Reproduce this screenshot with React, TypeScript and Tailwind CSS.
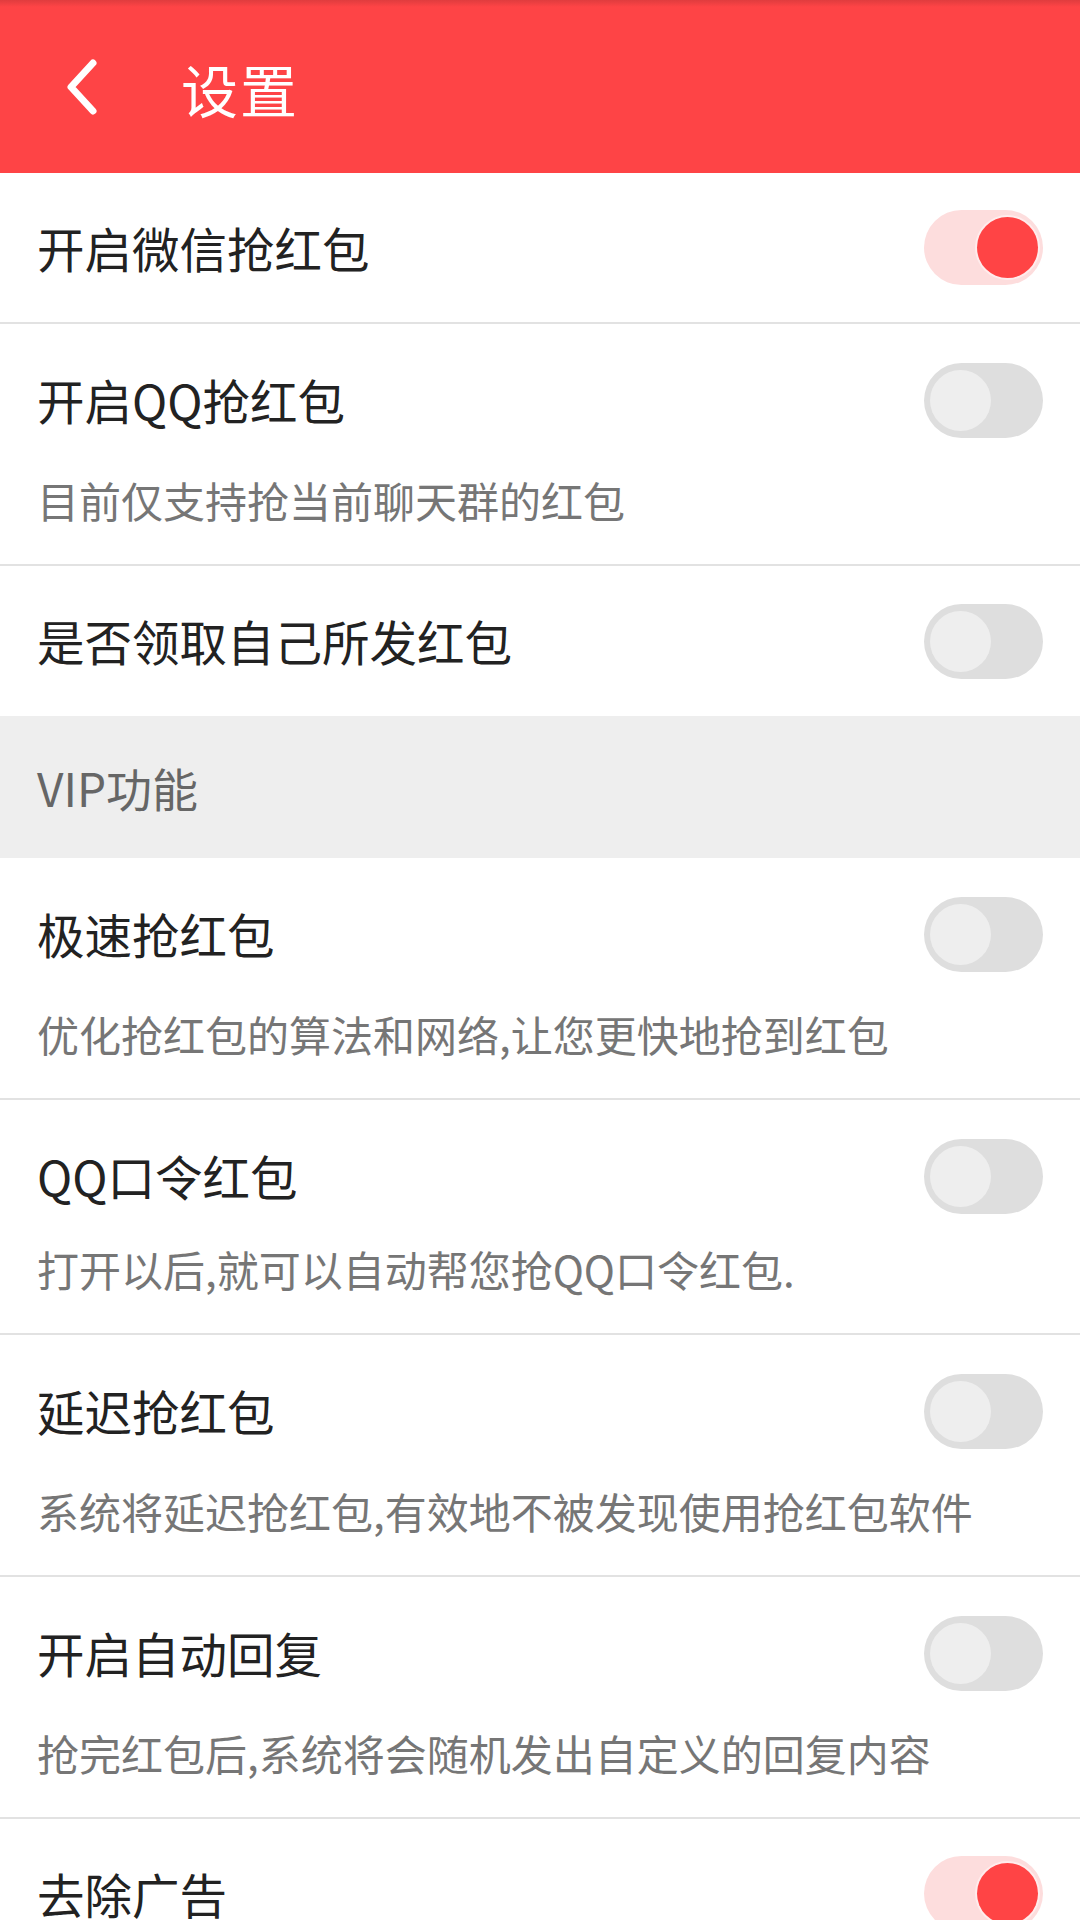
import React from 'react';

interface ToggleProps {
  on?: boolean;
}

// Android-style switch: pill track with a round thumb inside
const Toggle: React.FC<ToggleProps> = ({ on }) => {
  return (
    <div
      className={`flex h-[75px] w-[119px] shrink-0 items-center rounded-full ${
        on ? 'justify-end bg-[#fddddd] pr-[5px]' : 'justify-start bg-[#dedede] pl-[6px]'
      }`}
    >
      <div
        className={`h-[61px] w-[61px] rounded-full ${
          on ? 'bg-[#ff4445] ring-2 ring-[#ffecec]' : 'bg-[#eeeeee]'
        }`}
      ></div>
    </div>
  );
};

interface RowProps {
  title: string;
  desc?: string;
  on?: boolean;
  gap?: string;
}

const SettingRow: React.FC<RowProps> = ({ title, desc, on, gap = 'mt-[47px]' }) => {
  if (!desc) {
    return (
      <div className="flex h-[151px] items-center justify-between border-b-2 border-[#e2e2e2] px-[37px]">
        <span className="text-[47.5px] leading-[58px] text-[#222222]">{title}</span>
        <Toggle on={on} />
      </div>
    );
  }

  return (
    <div className="border-b-2 border-[#e2e2e2] px-[37px] pt-[47px] pb-[40px]">
      {/* Title line with switch */}
      <div className="flex h-[58px] items-center justify-between">
        <span className="text-[47.5px] leading-[58px] text-[#222222]">{title}</span>
        <Toggle on={on} />
      </div>
      <div className={`${gap} text-[42px] leading-[48px] text-[#767676]`}>{desc}</div>
    </div>
  );
};

export default function App() {
  return (
    <div
      className="min-h-[1920px] w-[1080px] overflow-hidden bg-white"
      style={{ fontFamily: '"Noto Sans CJK SC", "Noto Sans", sans-serif' }}
    >
      {/* Header */}
      <div className="flex h-[173px] items-center bg-gradient-to-b from-[#e03c3e] via-[#fe4446] via-[4%] to-[#fe4446] pl-[62px]">
        <svg width="40" height="60" viewBox="0 0 40 60" fill="none">
          <path
            d="M31 6 L9 30 L31 54"
            stroke="white"
            strokeWidth="7"
            strokeLinecap="round"
            strokeLinejoin="round"
          />
        </svg>
        <h1 className="ml-[79px] mt-[2px] text-[57px] leading-[64px] font-normal tracking-[2px] text-white">设置</h1>
      </div>

      <SettingRow title="开启微信抢红包" on />
      <SettingRow title="开启QQ抢红包" desc="目前仅支持抢当前聊天群的红包" />
      <div className="flex h-[150px] items-center justify-between px-[37px]">
        <span className="text-[47.5px] leading-[58px] text-[#222222]">是否领取自己所发红包</span>
        <Toggle />
      </div>

      {/* Section header */}
      <div className="flex h-[142px] items-center bg-[#eeeeee] px-[37px]">
        <span className="text-[46px] leading-[58px] text-[#666666]">VIP功能</span>
      </div>

      <SettingRow title="极速抢红包" desc="优化抢红包的算法和网络,让您更快地抢到红包" />
      <SettingRow title="QQ口令红包" desc="打开以后,就可以自动帮您抢QQ口令红包." gap="mt-[40px]" />
      <SettingRow title="延迟抢红包" desc="系统将延迟抢红包,有效地不被发现使用抢红包软件" />
      <SettingRow title="开启自动回复" desc="抢完红包后,系统将会随机发出自定义的回复内容" />
      <SettingRow title="去除广告" on />
    </div>
  );
}
